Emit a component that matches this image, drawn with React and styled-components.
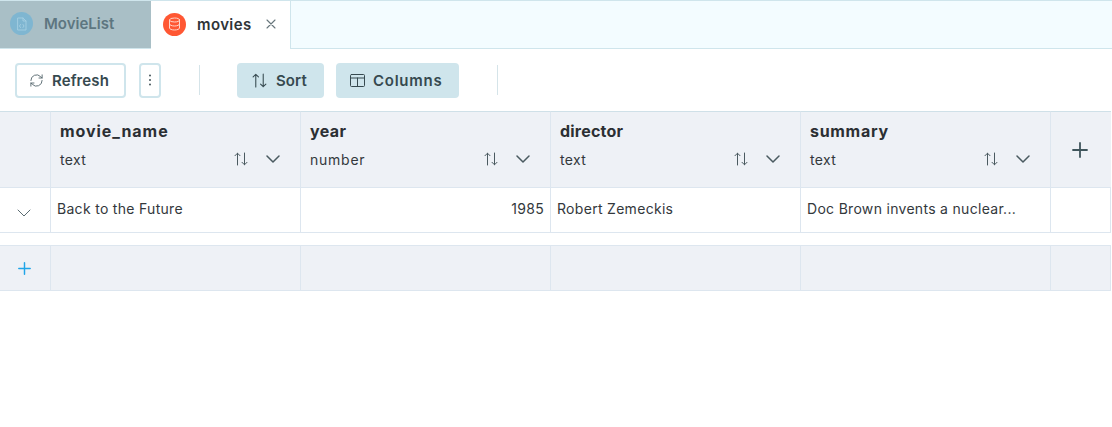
import React from "react";
import styled, { createGlobalStyle } from "styled-components";

const Global = createGlobalStyle`
  html, body { margin: 0; padding: 0; background: #fff; }
  body { font-family: Inter, "Noto Sans", sans-serif; width: 1112px; height: 427px; overflow: hidden; }
`;
const TabBar = styled.div`
  display: flex; height: 49px; box-sizing: border-box;
  border-top: 1px solid #cfe5ec; border-bottom: 1px solid #cfe5ec; background: #f3fcff;
`;
const Tab = styled.div`
  display: flex; align-items: center; box-sizing: border-box; height: ${p => p.$active ? "48px" : "47px"};
  width: ${p => p.$active ? "140px" : "151px"};
  padding-left: ${p => p.$active ? "12px" : "10px"};
  padding-bottom: 2px;
  background: ${p => p.$active ? "#fff" : "#a9bfc6"};
  border-right: ${p => p.$active ? "1px solid #cfe5ec" : "none"};
`;
const Badge = styled.span`
  width: 23px; height: 23px; border-radius: 50%; display: flex; align-items: center; justify-content: center;
  background: ${p => p.$bg}; flex: none;
`;
const TabLabel = styled.span`
  font-size: 15px; font-weight: 600; margin-left: 11px;
  color: ${p => p.$active ? "#2f3437" : "#5d7680"}; letter-spacing: ${p => p.$active ? "0.4px" : "0px"};
`;
const Close = styled.span`
  display: flex; margin-left: 14px; color: #67757b;
`;
const Toolbar = styled.div`
  display: flex; align-items: center; height: 62px; box-sizing: border-box; padding: 0 0 0 15px;
`;
const OutlineBtn = styled.div`
  display: flex; align-items: center; box-sizing: border-box; height: 35px; width: ${p => p.$w}px;
  margin-right: ${p => p.$mr}px; justify-content: ${p => p.$center ? "center" : "flex-start"};
  padding-left: ${p => p.$center ? 0 : 12}px; gap: 8px;
  border: 2px solid #cfe5ec; border-radius: 4px; background: #fff; color: #36494f;
  font-size: 15px; font-weight: 600; letter-spacing: 0.1px;
`;
const FillBtn = styled.div`
  display: flex; align-items: center; box-sizing: border-box; height: 35px; width: ${p => p.$w}px;
  margin-right: ${p => p.$mr}px; padding-left: 14px; gap: 8px;
  border-radius: 4px; background: #cfe5ec; color: #36494f;
  font-size: 15px; font-weight: 600; letter-spacing: ${p => p.$ls}px;
`;
const Divider = styled.div`
  width: 1px; height: 30px; background: #d5e4e9; margin-right: ${p => p.$mr}px;
`;
const Grid = styled.div`
  display: grid; grid-template-columns: 51px 250px 250px 250px 250px 60px; width: 1111px;
`;
const HeadCell = styled.div`
  box-sizing: border-box; height: 77px; background: #eef1f6;
  border-top: 1px solid #cfe0e8; border-bottom: 1px solid #dde6ef; border-right: 1px solid #dde6ef;
  padding: 10px 10px 0 9px; display: flex; flex-direction: column;
`;
const PlusHead = styled(HeadCell)`
  padding: 0 3px 0 0; align-items: center; justify-content: center; color: #3f555c; border-right: none;
`;
const ColName = styled.div`
  font-size: 16px; font-weight: 700; color: #2b2f33; line-height: 18px; letter-spacing: ${p => p.$ls}px;
`;
const TypeRow = styled.div`
  display: flex; align-items: center; margin-top: 9px; height: 20px;
`;
const TypeName = styled.span`
  font-size: 14px; color: #33383c; flex: 1; letter-spacing: ${p => p.$ls}px;
`;
const Cell = styled.div`
  box-sizing: border-box; height: 45px; background: #fff; border-bottom: 1px solid #dde6ef; border-right: 1px solid #dde6ef;
  display: flex; align-items: center; padding: 0 6px 3px; font-size: 14px; color: #33383c; white-space: nowrap;
  justify-content: ${p => p.$end ? "flex-end" : "flex-start"};
  letter-spacing: 0.3px;
`;
const ExpandCell = styled(Cell)`
  justify-content: center; padding: 6px 3px 0 0; color: #5a6b71;
`;
const Spacer = styled.div`height: 12px;`;
const AddCell = styled.div`
  box-sizing: border-box; height: 46px; background: #eef1f6; border-top: 1px solid #dde6ef; border-bottom: 1px solid #dde6ef; border-right: 1px solid #dde6ef;
  display: flex; align-items: center; justify-content: center; padding-right: 2px; color: #1fa5e8;
`;
const Icon = styled.svg`
  display: block; flex: none; fill: none; stroke: currentColor; stroke-linecap: round; stroke-linejoin: round;
`;
const SortIcons = styled.div`
  display: flex; align-items: center; color: #4a5a60; gap: 17px; margin-right: 10px;
`;

const Updown = ({ size = 16, sw = 1 }) => (
  <Icon width={size} height={size} viewBox="0 0 16 16" strokeWidth={sw}>
    <path d="M4.5 14V2.2M2 4.7l2.5-2.5L7 4.7" />
    <path d="M11.5 2v11.8M9 11.3l2.5 2.5 2.5-2.5" />
  </Icon>
);
const Chevron = ({ w = 14, h = 8, sw = 1.5 }) => (
  <Icon width={w} height={h} viewBox="0 0 14 8" strokeWidth={sw}>
    <path d="M1 1l6 6 6-6" />
  </Icon>
);
const Plus = ({ size = 16, sw = 1.8 }) => (
  <Icon width={size} height={size} viewBox="0 0 16 16" strokeWidth={sw}>
    <path d="M8 1v14M1 8h14" />
  </Icon>
);

const columns = [
  { name: "movie_name", type: "text", nameLs: 0.95, typeLs: 0.35 },
  { name: "year", type: "number", nameLs: 0.4, typeLs: 0.75 },
  { name: "director", type: "text", nameLs: 0.2, typeLs: 0.35 },
  { name: "summary", type: "text", nameLs: 0.7, typeLs: 0.35 },
];

export default function App() {
  return (
    <>
      <Global />
      <TabBar>
        <Tab>
          <Badge $bg="#7fb6d1">
            <Icon width="13" height="14" viewBox="0 0 13 14" strokeWidth="0.9" style={{ color: "#a5cfe2" }}>
              <path d="M3 1h5l3 3v9H3zM8 1v3h3" />
              <path d="M5.5 7.5L4.5 9l1 1.5M8 7.5L9 9l-1 1.5" />
            </Icon>
          </Badge>
          <TabLabel>MovieList</TabLabel>
        </Tab>
        <Tab $active>
          <Badge $bg="#ff5733">
            <Icon width="13" height="14" viewBox="0 0 13 14" strokeWidth="1" style={{ color: "#ffd5c9" }}>
              <ellipse cx="6.5" cy="3" rx="5" ry="2" />
              <path d="M1.5 3v8c0 1.1 2.2 2 5 2s5-.9 5-2V3M1.5 7c0 1.1 2.2 2 5 2s5-.9 5-2" />
            </Icon>
          </Badge>
          <TabLabel $active>movies</TabLabel>
          <Close>
            <Icon width="10" height="10" viewBox="0 0 10 10" strokeWidth="1.1">
              <path d="M1 1l8 8M9 1l-8 8" />
            </Icon>
          </Close>
        </Tab>
      </TabBar>
      <Toolbar>
        <OutlineBtn $w={111} $mr={13}>
          <Icon width="15" height="15" viewBox="0 0 24 24" strokeWidth="1.5" style={{ color: "#5a6b71" }}>
            <path d="M3 12a9 9 0 0 1 15.5-6.2L21 8M21 3v5h-5" />
            <path d="M21 12a9 9 0 0 1-15.5 6.2L3 16M3 21v-5h5" />
          </Icon>
          Refresh
        </OutlineBtn>
        <OutlineBtn $w={22} $mr={38} $center>
          <Icon width="4" height="14" viewBox="0 0 4 14" strokeWidth="0" style={{ fill: "#46565c" }}>
            <circle cx="2" cy="2.5" r="1" />
            <circle cx="2" cy="7" r="1" />
            <circle cx="2" cy="11.5" r="1" />
          </Icon>
        </OutlineBtn>
        <Divider $mr={37} />
        <FillBtn $w={87} $mr={12} $ls={0.1}>
          <Updown size={17} />
          Sort
        </FillBtn>
        <FillBtn $w={123} $mr={38} $ls={0.75}>
          <Icon width="15" height="13" viewBox="0 0 15 13" strokeWidth="1">
            <rect x="0.5" y="0.5" width="14" height="12" rx="1" />
            <path d="M0.5 4h14M7.5 4v8.5" />
          </Icon>
          Columns
        </FillBtn>
        <Divider $mr={0} />
      </Toolbar>
      <Grid>
        <HeadCell />
        {columns.map(c => (
          <HeadCell key={c.name}>
            <ColName $ls={c.nameLs}>{c.name}</ColName>
            <TypeRow>
              <TypeName $ls={c.typeLs}>{c.type}</TypeName>
              <SortIcons>
                <Updown />
                <Chevron />
              </SortIcons>
            </TypeRow>
          </HeadCell>
        ))}
        <PlusHead><Plus /></PlusHead>

        <ExpandCell><Chevron sw={1} /></ExpandCell>
        <Cell>Back to the Future</Cell>
        <Cell $end>1985</Cell>
        <Cell>Robert Zemeckis</Cell>
        <Cell>Doc Brown invents a nuclear...</Cell>
        <Cell />
      </Grid>
      <Spacer />
      <Grid>
        <AddCell><Plus size={13} /></AddCell>
        <AddCell />
        <AddCell />
        <AddCell />
        <AddCell />
        <AddCell />
      </Grid>
    </>
  );
}
